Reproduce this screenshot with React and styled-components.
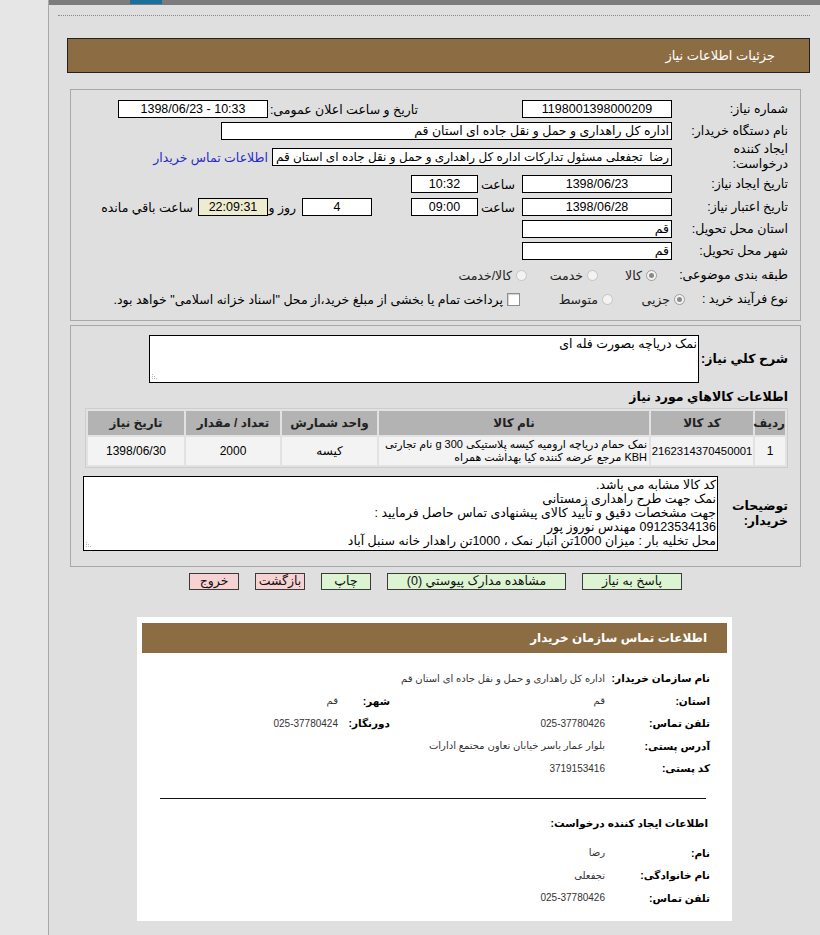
import React from "react";
import styled, { createGlobalStyle, css } from "styled-components";

const GlobalStyle = createGlobalStyle`
  html, body { margin: 0; padding: 0; }
  body {
    background: #dfdfdf;
    font-family: "Liberation Sans", "DejaVu Sans", sans-serif;
    font-size: 12px;
    color: #000;
  }
  * { box-sizing: border-box; }
`;

const Page = styled.div`
  display: flex;
  min-height: 935px;
`;

const Sidebar = styled.div`
  width: 49px;
  flex: none;
  background: #e6e6e6;
  border-right: 1px solid #a9a9a9;
`;

const Main = styled.div`
  flex: 1;
  min-width: 0;
`;

const TopBar = styled.div`
  height: 5px;
  background: #7c7c7c;
  display: flex;
  padding-left: 81px;
`;

const TabMark = styled.div`
  width: 32px;
  height: 4px;
  background: #1b6f9c;
`;

const DottedRule = styled.div`
  margin: 10px 10px 0 9px;
  border-top: 1px dotted #8a8a8a;
`;

const Content = styled.div`
  direction: rtl;
`;

const TitleBar = styled.div`
  margin: 22px 10px 0 18px;
  height: 35px;
  background: #8c6d43;
  border: 1px solid #222;
  display: flex;
  align-items: center;
  padding-right: 34px;
  color: #fff;
  font-size: 13px;
`;

const Fieldset = styled.div`
  margin: ${(p) => p.$mt}px 19px 0 21px;
  border: 1px solid #a8a8a8;
  padding: ${(p) => p.$pt}px 12px ${(p) => p.$pb}px 0;
`;

const FormRow = styled.div`
  display: flex;
  align-items: center;
  height: ${(p) => p.$h}px;
  margin-top: ${(p) => p.$mt || 0}px;
`;

const Label = styled.div`
  width: ${(p) => p.$w || 116}px;
  flex: none;
  text-align: right;
  font-size: 12.5px;
  line-height: 15px;
  font-weight: ${(p) => (p.$bold ? "bold" : "normal")};
`;

const Cell = styled.div`
  width: ${(p) => p.$w}px;
  flex: none;
  text-align: right;
  padding-right: ${(p) => p.$pr || 0}px;
  font-size: 12.5px;
  white-space: nowrap;
`;

const Spacer = styled.div`
  width: ${(p) => p.$w}px;
  flex: none;
`;

const Field = styled.div`
  width: ${(p) => p.$w}px;
  flex: none;
  height: 18px;
  border: 1px solid #000;
  background: ${(p) => p.$bg || "#fff"};
  line-height: 16px;
  text-align: ${(p) => p.$align || "center"};
  direction: ${(p) => (p.$ltr ? "ltr" : "rtl")};
  padding: 0 2px;
  overflow: hidden;
  white-space: pre;
  font-size: ${(p) => p.$fs || 12.5}px;
`;

const Text = styled.span`
  margin-right: ${(p) => p.$mr || 0}px;
  font-size: 12.5px;
  white-space: nowrap;
`;

const Link = styled.a`
  margin-right: 4px;
  color: #2a2acc;
  font-size: 12.5px;
  text-decoration: none;
  white-space: nowrap;
`;

const Option = styled.div`
  width: ${(p) => (p.$w ? `${p.$w}px` : "auto")};
  flex: none;
  display: flex;
  align-items: center;
  gap: 4px;
  padding-right: ${(p) => p.$pr || 0}px;
  font-size: 12.5px;
  color: #222;
  white-space: nowrap;
`;

const Radio = styled.span`
  width: 11px;
  height: 11px;
  border-radius: 50%;
  flex: none;
  border: 1px solid #c4c4c4;
  background: #f3f3f3;
  position: relative;
  ${(p) =>
    p.$checked &&
    css`
      border-color: #9c9c9c;
      &::after {
        content: "";
        position: absolute;
        left: 2px;
        top: 2px;
        width: 5px;
        height: 5px;
        border-radius: 50%;
        background: #8a8a8a;
      }
    `}
`;

const Checkbox = styled.span`
  width: 13px;
  height: 13px;
  flex: none;
  border: 1px solid #8e8e8e;
  background: #fff;
  box-shadow: inset 1px 1px 1px #d0d0d0;
`;

const OptionText = styled.span`
  color: #000;
`;

const Area = styled.div`
  position: relative;
  width: ${(p) => p.$w}px;
  height: ${(p) => p.$h}px;
  flex: none;
  border: 1px solid #000;
  background: #fff;
  padding: 1px 1px 0 0;
  text-align: right;
  font-size: 12.5px;
  line-height: 14px;
  white-space: nowrap;
  overflow: hidden;
`;

const Grip = styled.svg`
  position: absolute;
  left: 2px;
  bottom: 2px;
`;

const SectionTitle = styled.div`
  height: 25px;
  padding-top: 6px;
  font-weight: bold;
  font-size: 12.5px;
  line-height: 16px;
`;

const ItemsTable = styled.table`
  width: 703px;
  table-layout: fixed;
  border-collapse: separate;
  border-spacing: 2px;
  border: 1px solid #cdcdcd;
  background: #e2e2e2;
  font-size: 12px;
`;

const Th = styled.th`
  width: ${(p) => p.$w}px;
  height: 24px;
  background: #b3b3b3;
  font-weight: bold;
  color: #222;
  padding: 0;
  white-space: nowrap;
`;

const Td = styled.td`
  height: 28px;
  background: #f3f3f3;
  text-align: ${(p) => p.$align || "center"};
  padding: 0 ${(p) => (p.$tight ? 0 : 2)}px;
  font-size: ${(p) => p.$fs || 12}px;
  line-height: 13px;
  white-space: nowrap;
  overflow: hidden;
`;

const ButtonBar = styled.div`
  display: flex;
  justify-content: center;
  gap: 16px;
  margin-top: 6px;
  padding-left: 2px;
`;

const Button = styled.button`
  width: ${(p) => p.$w}px;
  height: 17px;
  padding: 0;
  border: 1px solid #3a3a3a;
  background: ${(p) => (p.$tone === "pink" ? "#f7d2d2" : "#dcf4d2")};
  font-family: "Liberation Sans", "DejaVu Sans", sans-serif;
  font-size: 12.5px;
  line-height: 15px;
  color: #111;
  white-space: nowrap;
  overflow: visible;
`;

const ContactPanel = styled.div`
  width: 595px;
  height: 304px;
  margin: 27px auto 0;
  background: #fff;
  padding: 6px 5px;
`;

const ContactHeader = styled.div`
  height: 30px;
  background: #8c6d43;
  color: #fff;
  font-weight: bold;
  font-size: 12px;
  display: flex;
  align-items: center;
  padding-right: 20px;
`;

const ContactGrid = styled.div`
  display: grid;
  grid-template-columns: ${(p) => p.$cols};
  grid-auto-rows: 22.5px;
  align-items: center;
  margin-top: ${(p) => p.$mt}px;
  padding-right: 17px;
`;

const CLabel = styled.div`
  font-weight: bold;
  font-size: 10.5px;
  color: #000;
  white-space: nowrap;
`;

const CValue = styled.div`
  grid-column: span ${(p) => p.$span || 1};
  font-size: 10px;
  color: #333;
  white-space: nowrap;
`;

const Rule = styled.div`
  margin: 18px 21px 0 18px;
  border-top: 1px solid #111;
`;

const SubHeading = styled.div`
  margin-top: 16px;
  padding-right: 19px;
  font-weight: bold;
  font-size: 10.5px;
  line-height: 16px;
`;

const GripIcon = () => (
  <Grip width="6" height="6" viewBox="0 0 6 6">
    <g fill="#b8b8b8">
      <rect x="0" y="4" width="1" height="1" />
      <rect x="2" y="4" width="1" height="1" />
      <rect x="4" y="4" width="1" height="1" />
      <rect x="0" y="2" width="1" height="1" />
      <rect x="2" y="2" width="1" height="1" />
      <rect x="0" y="0" width="1" height="1" />
    </g>
  </Grip>
);

export default function App() {
  return (
    <>
      <GlobalStyle />
      <Page>
        <Sidebar />
        <Main>
          <TopBar>
            <TabMark />
          </TopBar>
          <DottedRule />
          <Content>
            <TitleBar>جزئیات اطلاعات نیاز</TitleBar>

            <Fieldset $mt={16} $pt={8} $pb={10}>
              <FormRow $h={22}>
                <Label>شماره نیاز:</Label>
                <Field $w={150}>1198001398000209</Field>
                <Spacer $w={104} />
                <Cell $w={150}>تاریخ و ساعت اعلان عمومی:</Cell>
                <Field $w={150} $ltr>1398/06/23 - 10:33</Field>
              </FormRow>
              <FormRow $h={22}>
                <Label>نام دستگاه خریدار:</Label>
                <Field $w={451} $align="right">
                  اداره کل راهداری و حمل و نقل جاده ای استان قم
                </Field>
              </FormRow>
              <FormRow $h={30}>
                <Label>
                  ایجاد کننده
                  <br />
                  درخواست:
                </Label>
                <Field $w={400} $align="right" $fs={12}>
                  رضا  تجفعلی مسئول تدارکات اداره کل راهداری و حمل و نقل جاده ای استان قم
                </Field>
                <Link href="#">اطلاعات تماس خریدار</Link>
              </FormRow>
              <FormRow $h={24}>
                <Label>تاریخ ایجاد نیاز:</Label>
                <Field $w={150}>1398/06/23</Field>
                <Cell $w={44} $pr={7}>ساعت</Cell>
                <Field $w={67}>10:32</Field>
              </FormRow>
              <FormRow $h={22}>
                <Label>تاریخ اعتبار نیاز:</Label>
                <Field $w={150}>1398/06/28</Field>
                <Cell $w={44} $pr={7}>ساعت</Cell>
                <Field $w={67}>09:00</Field>
                <Spacer $w={39} />
                <Field $w={70}>4</Field>
                <Cell $w={34} $pr={6}>روز و</Cell>
                <Field $w={70} $bg="#eeeccf">22:09:31</Field>
                <Text $mr={5}>ساعت باقي مانده</Text>
              </FormRow>
              <FormRow $h={22}>
                <Label>استان محل تحویل:</Label>
                <Field $w={150} $align="right">قم</Field>
              </FormRow>
              <FormRow $h={22}>
                <Label>شهر محل تحویل:</Label>
                <Field $w={150} $align="right">قم</Field>
              </FormRow>
              <FormRow $h={26}>
                <Label>طبقه بندی موضوعی:</Label>
                <Spacer $w={12} />
                <Option $w={60} $pr={3}>
                  <Radio $checked />
                  کالا
                </Option>
                <Option $w={70} $pr={2}>
                  <Radio />
                  خدمت
                </Option>
                <Option $pr={3}>
                  <Radio />
                  کالا/خدمت
                </Option>
              </FormRow>
              <FormRow $h={22}>
                <Label $w={103}>نوع فرآیند خرید :</Label>
                <Option $w={72}>
                  <Radio $checked />
                  جزیی
                </Option>
                <Option $w={93}>
                  <Radio />
                  متوسط
                </Option>
                <Option>
                  <Checkbox />
                  <OptionText>
                    پرداخت تمام یا بخشی از مبلغ خرید،از محل "اسناد خزانه اسلامی" خواهد بود.
                  </OptionText>
                </Option>
              </FormRow>
            </Fieldset>

            <Fieldset $mt={4} $pt={9} $pb={15}>
              <FormRow $h={48}>
                <Label $w={89} $bold>شرح كلي نياز:</Label>
                <Area $w={550} $h={48}>
                  نمک دریاچه بصورت فله ای
                  <GripIcon />
                </Area>
              </FormRow>
              <SectionTitle>اطلاعات كالاهاي مورد نياز</SectionTitle>
              <ItemsTable>
                <thead>
                  <tr>
                    <Th $w={30}>ردیف</Th>
                    <Th $w={102}>کد کالا</Th>
                    <Th $w={270}>نام کالا</Th>
                    <Th $w={95}>واحد شمارش</Th>
                    <Th $w={94}>تعداد / مقدار</Th>
                    <Th $w={96}>تاریخ نیاز</Th>
                  </tr>
                </thead>
                <tbody>
                  <tr>
                    <Td>1</Td>
                    <Td $tight $fs={11.3}>2162314370450001</Td>
                    <Td $align="right" $fs={11}>
                      نمک حمام دریاچه ارومیه کیسه پلاستیکی 300 g نام تجارتی
                      <br />
                      KBH مرجع عرضه کننده کیا بهداشت همراه
                    </Td>
                    <Td>کیسه</Td>
                    <Td>2000</Td>
                    <Td>1398/06/30</Td>
                  </tr>
                </tbody>
              </ItemsTable>
              <FormRow $h={75} $mt={8}>
                <Label $w={70} $bold>
                  توضیحات
                  <br />
                  خریدار:
                </Label>
                <Area $w={635} $h={75}>
                  کد کالا مشابه می باشد.
                  <br />
                  نمک جهت طرح راهداری زمستانی
                  <br />
                  جهت مشخصات دقیق و تأیید کالای پیشنهادی تماس حاصل فرمایید :
                  <br />
                  09123534136 مهندس نوروز پور
                  <br />
                  محل تخلیه بار : میزان 1000تن انبار نمک ، 1000تن راهدار خانه سنبل آباد
                  <GripIcon />
                </Area>
              </FormRow>
            </Fieldset>

            <ButtonBar>
              <Button $w={100}>پاسخ به نیاز</Button>
              <Button $w={179}>مشاهده مدارک پیوستي (0)</Button>
              <Button $w={50}>چاپ</Button>
              <Button $w={50} $tone="pink">بازگشت</Button>
              <Button $w={50} $tone="pink">خروج</Button>
            </ButtonBar>

            <ContactPanel>
              <ContactHeader>اطلاعات تماس سازمان خریدار</ContactHeader>
              <ContactGrid $cols="105px 215px 52px 1fr" $mt={14}>
                <CLabel>نام سازمان خریدار:</CLabel>
                <CValue $span={3}>اداره کل راهداری و حمل و نقل جاده ای استان قم</CValue>
                <CLabel>استان:</CLabel>
                <CValue>قم</CValue>
                <CLabel>شهر:</CLabel>
                <CValue>قم</CValue>
                <CLabel>تلفن تماس:</CLabel>
                <CValue>025-37780426</CValue>
                <CLabel>دورنگار:</CLabel>
                <CValue>025-37780424</CValue>
                <CLabel>آدرس پستی:</CLabel>
                <CValue $span={3}>بلوار عمار یاسر خیابان تعاون مجتمع ادارات</CValue>
                <CLabel>کد پستی:</CLabel>
                <CValue $span={3}>3719153416</CValue>
              </ContactGrid>
              <Rule />
              <SubHeading>اطلاعات ایجاد کننده درخواست:</SubHeading>
              <ContactGrid $cols="105px 1fr" $mt={11}>
                <CLabel>نام:</CLabel>
                <CValue>رضا</CValue>
                <CLabel>نام خانوادگی:</CLabel>
                <CValue>تجفعلی</CValue>
                <CLabel>تلفن تماس:</CLabel>
                <CValue>025-37780426</CValue>
              </ContactGrid>
            </ContactPanel>
          </Content>
        </Main>
      </Page>
    </>
  );
}
